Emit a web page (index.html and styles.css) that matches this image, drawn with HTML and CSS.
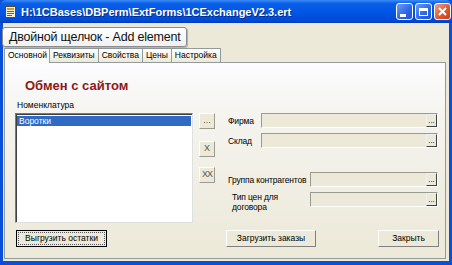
FILE: index.html
```html
<html>
<head>
  <meta charset="UTF-8">
  <title>1CExchangeV2.3.ert</title>
  <link rel="stylesheet" href="styles.css">
</head>
<body>
  <div class="window">
    <div class="titlebar">
      <svg class="app-icon" width="11" height="12" viewBox="0 0 11 12">
        <rect x="0.5" y="0.5" width="10" height="11" fill="#f4f0d8" stroke="#5a4a20"/>
        <rect x="2" y="2" width="7" height="2" fill="#c8a030"/>
        <rect x="2" y="5" width="7" height="1" fill="#806020"/>
        <rect x="2" y="7" width="7" height="1" fill="#806020"/>
        <rect x="2" y="9" width="5" height="1" fill="#806020"/>
      </svg>
      <span class="title">H:\1CBases\DBPerm\ExtForms\1CExchangeV2.3.ert</span>
      <div class="caption-btns">
        <span class="cap-btn"><span class="min-glyph"></span></span>
        <span class="cap-btn"><span class="max-glyph"></span></span>
        <span class="cap-btn close">
          <svg width="11" height="11" viewBox="0 0 11 11"><path d="M2 2 L9 9 M9 2 L2 9" stroke="#fff" stroke-width="2"/></svg>
        </span>
      </div>
    </div>

    <div class="client">
      <div class="tooltip">Двойной щелчок - Add element</div>

      <div class="tabs">
        <span class="tab active">Основной</span>
        <span class="tab">Реквизиты</span>
        <span class="tab">Свойства</span>
        <span class="tab">Цены</span>
        <span class="tab">Настройка</span>
      </div>

      <div class="panel">
        <h1 class="heading">Обмен с сайтом</h1>
        <div class="list-label">Номенклатура</div>

        <div class="main-row">
          <div class="listbox">
            <div class="list-item selected">Воротки</div>
          </div>

          <div class="side-btns">
            <span class="small-btn">...</span>
            <span class="small-btn gap1">X</span>
            <span class="small-btn gap2">XX</span>
          </div>

          <div class="form">
            <div class="form-row">
              <span class="label">Фирма</span>
              <span class="field w177"><span class="pick">...</span></span>
            </div>
            <div class="form-row">
              <span class="label">Склад</span>
              <span class="field w177"><span class="pick">...</span></span>
            </div>
            <div class="form-row spaced">
              <span class="label">Группа контрагентов</span>
              <span class="field w128"><span class="pick">...</span></span>
            </div>
            <div class="form-row">
              <span class="label two-line">Тип цен для<br>договора</span>
              <span class="field w128"><span class="pick">...</span></span>
            </div>
          </div>
        </div>

        <div class="bottom-row">
          <span class="btn focused">Выгрузить остатки</span>
          <span class="btn mid">Загрузить заказы</span>
          <span class="btn close-btn">Закрыть</span>
        </div>
      </div>
    </div>
  </div>
</body>
</html>
```

FILE: styles.css
```css
body {
    margin: 0;
    padding: 0;
    background-color: #ece9d8;
    font-family: 'Liberation Sans', Arial, sans-serif;
}

.window {
    width: 452px;
    height: 265px;
    box-sizing: border-box;
    background-color: #0a4fd8;
    padding: 0 3px 4px 3px;
    display: flex;
    flex-direction: column;
    overflow: hidden;
}

/* Title bar */
.titlebar {
    height: 23px;
    margin: 0 -3px;
    padding: 0 1px 0 5px;
    display: flex;
    align-items: center;
    background: linear-gradient(#3b8cf5 0%, #0a5ee8 15%, #0055e5 55%, #0049d4 90%, #003cb8 100%);
    border-radius: 6px 6px 0 0;
}

.app-icon {
    margin-right: 5px;
}

.title {
    color: #ffffff;
    font-weight: bold;
    font-size: 11px;
    text-shadow: 1px 1px 0 #0a2a80;
    flex: 1;
}

.caption-btns {
    display: flex;
    gap: 2px;
}

.cap-btn {
    width: 17px;
    height: 17px;
    box-sizing: border-box;
    border: 1px solid #ffffff;
    border-radius: 3px;
    background: linear-gradient(135deg, #6a9cf8, #2b66e6 60%, #1f55d8);
    display: flex;
    align-items: center;
    justify-content: center;
}

.cap-btn.close {
    background: linear-gradient(135deg, #f0a088, #e05a32 55%, #c83a18);
}

.min-glyph {
    width: 6px;
    height: 3px;
    background: #ffffff;
    margin: 7px 4px 0 0;
}

.max-glyph {
    width: 9px;
    height: 8px;
    box-sizing: border-box;
    border: 1px solid #ffffff;
    border-top-width: 3px;
}

/* Client area */
.client {
    flex: 1;
    background-color: #ece9d8;
    display: flex;
    flex-direction: column;
    padding: 25px 3px 2px 1px;
    position: relative;
}

.tooltip {
    position: absolute;
    left: -1px;
    top: 4px;
    width: 185px;
    height: 20px;
    box-sizing: border-box;
    background: linear-gradient(#ffffff, #f0f0f0);
    border: 1px solid #8c8c8c;
    border-radius: 3px;
    box-shadow: 1px 1px 1px rgba(0, 0, 0, 0.25);
    font-size: 12.5px;
    letter-spacing: -0.2px;
    line-height: 18px;
    padding-left: 6px;
    color: #111111;
    white-space: nowrap;
}

/* Tabs */
.tabs {
    display: flex;
    height: 14px;
    align-items: flex-end;
}

.tab {
    font-size: 8.5px;
    color: #000000;
    height: 13px;
    line-height: 13px;
    padding: 0 3px;
    border: 1px solid #919b9c;
    border-bottom: none;
    border-left: none;
    background: linear-gradient(#ffffff, #ece9d8);
}

.tab:first-child {
    border-left: 1px solid #919b9c;
}

.tab.active {
    height: 14px;
    width: 38px;
    background: #fbfbf9;
    position: relative;
    z-index: 1;
    margin-bottom: -1px;
    line-height: 12px;
}

.panel {
    flex: 1;
    border: 1px solid #919b9c;
    background: linear-gradient(#fcfcfe, #f4f3ee 30%, #ece9d8);
    display: flex;
    flex-direction: column;
}

.heading {
    margin: 15px 0 0 20px;
    font-size: 13px;
    font-weight: bold;
    color: #8b1a1a;
    height: 15px;
    line-height: 15px;
}

.list-label {
    font-size: 8.5px;
    margin: 7px 0 0 12px;
    height: 10px;
}

.main-row {
    display: flex;
    margin-top: 3px;
    padding-left: 10px;
}

.listbox {
    width: 178px;
    height: 110px;
    box-sizing: border-box;
    background: #ffffff;
    border: 1px solid;
    border-color: #7a7a7a #e0e0e0 #e0e0e0 #7a7a7a;
    box-shadow: inset 1px 1px 0 #404040;
    padding: 2px 1px;
}

.list-item {
    font-size: 8.5px;
    height: 10px;
    line-height: 10px;
    padding-left: 2px;
}

.list-item.selected {
    background: #316ac5;
    color: #ffffff;
}

.side-btns {
    display: flex;
    flex-direction: column;
    margin-left: 6px;
}

.small-btn {
    width: 16px;
    height: 16px;
    box-sizing: border-box;
    border: 1px solid;
    border-color: #ffffff #9a9a90 #9a9a90 #ffffff;
    background: #ece9d8;
    font-size: 9px;
    color: #555555;
    text-align: center;
    line-height: 13px;
}

.small-btn.gap1 {
    margin-top: 12px;
}

.small-btn.gap2 {
    margin-top: 10px;
    letter-spacing: -1px;
}

.form {
    margin-left: 13px;
    display: flex;
    flex-direction: column;
    gap: 5px;
}

.form-row {
    display: flex;
    align-items: center;
    justify-content: space-between;
    width: 210px;
    height: 15px;
}

.form-row.spaced {
    margin-top: 19px;
}

.label {
    font-size: 8.5px;
    letter-spacing: -0.15px;
    color: #000000;
}

.label.two-line {
    line-height: 10px;
    margin-left: 4px;
    margin-top: 4px;
}

.field {
    height: 15px;
    box-sizing: border-box;
    border: 1px solid;
    border-color: #9a9a90 #ffffff #ffffff #9a9a90;
    background: #ece9d8;
    display: flex;
    justify-content: flex-end;
}

.field.w177 {
    width: 177px;
}

.field.w128 {
    width: 128px;
}

.pick {
    width: 11px;
    height: 13px;
    box-sizing: border-box;
    border: 1px solid #404040;
    border-top-color: #f0f0f0;
    border-left-color: #f0f0f0;
    background: #ece9d8;
    font-size: 8px;
    line-height: 12px;
    text-align: center;
    color: #000000;
}

/* Bottom buttons */
.bottom-row {
    display: flex;
    margin-top: 7px;
    padding-left: 11px;
}

.btn {
    height: 17px;
    box-sizing: border-box;
    border: 1px solid;
    border-color: #ffffff #808080 #808080 #ffffff;
    background: #ece9d8;
    font-size: 8.5px;
    text-align: center;
    line-height: 15px;
    color: #000000;
}

.btn.focused {
    width: 91px;
    border: 1px solid #000000;
    outline: 1px dotted #555555;
    outline-offset: -3px;
}

.btn.mid {
    width: 90px;
    margin-left: 119px;
}

.btn.close-btn {
    width: 61px;
    margin-left: 62px;
}
```
